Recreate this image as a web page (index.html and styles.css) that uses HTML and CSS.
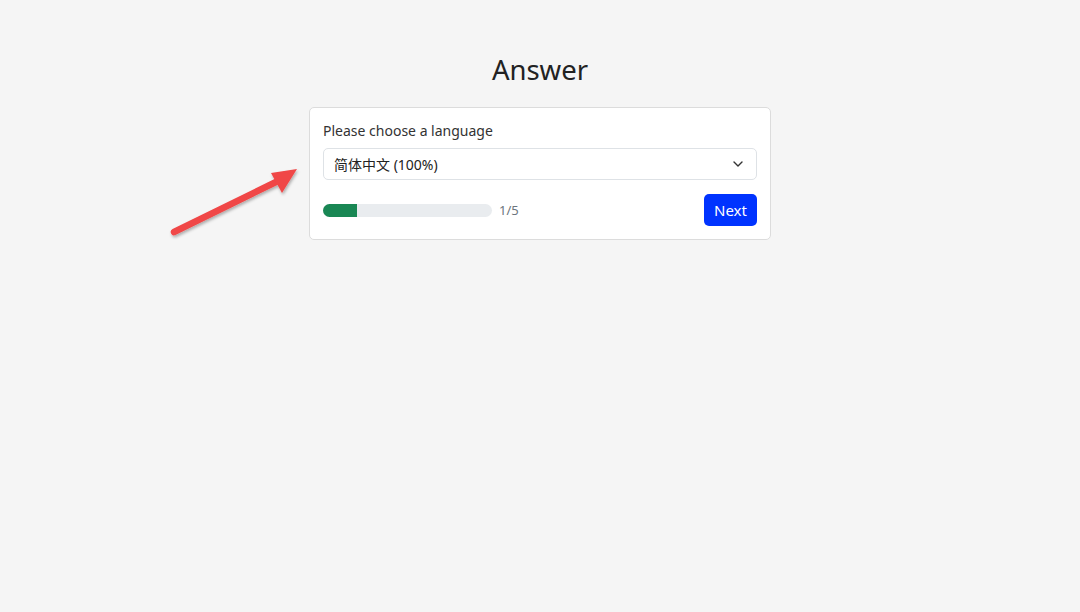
FILE: index.html
```html
<!DOCTYPE html>
<html>
<head>
<meta charset="utf-8">
<link rel="stylesheet" href="styles.css">
</head>
<body>
<main class="page">
  <h1 class="title">Answer</h1>
  <div class="card-wrap">
    <svg class="arrow" width="145" height="90" viewBox="0 0 145 90">
      <defs>
        <filter id="sh" x="-20%" y="-20%" width="140%" height="140%">
          <feDropShadow dx="1" dy="2" stdDeviation="1.5" flood-color="#000" flood-opacity="0.3"/>
        </filter>
      </defs>
      <g filter="url(#sh)">
        <line x1="12" y1="75" x2="116" y2="24" stroke="#f04646" stroke-width="6.5" stroke-linecap="round"/>
        <polygon points="135,12 109,16 120,36" fill="#f04646"/>
      </g>
    </svg>
    <section class="card">
      <label class="label">Please choose a language</label>
      <div class="select">
        <span>简体中文 (100%)</span>
        <svg class="chev" width="12" height="12" viewBox="0 0 12 12"><path d="M2 4l4 4 4-4" fill="none" stroke="#333" stroke-width="1.4" stroke-linecap="round" stroke-linejoin="round"/></svg>
      </div>
      <div class="footer">
        <div class="progress-group">
          <div class="progress"><div class="fill" style="width:20%"></div></div>
          <span class="count">1/5</span>
        </div>
        <button class="btn">Next</button>
      </div>
    </section>
  </div>
</main>
</body>
</html>
```
FILE: styles.css
```css
html, body {
  margin: 0;
  padding: 0;
  background: #f5f5f5;
  font-family: "Noto Sans", "Open Sans", "Noto Sans CJK SC", sans-serif;
  color: #212529;
}
.page {
  display: flex;
  flex-direction: column;
  align-items: center;
  padding-top: 50px;
}
.title {
  margin: 0 0 17px;
  font-size: 27.5px;
  font-weight: 400;
  line-height: 40px;
  color: #222;
}
.card-wrap {
  position: relative;
}
.arrow {
  position: absolute;
  left: -147px;
  top: 50px;
}
.card {
  width: 434px;
  background: #fff;
  border: 1px solid #dcdcdc;
  border-radius: 5px;
  padding: 13px;
  display: flex;
  flex-direction: column;
}
.label {
  font-size: 14px;
  line-height: 20px;
  color: #333;
  margin-bottom: 7px;
}
.select {
  height: 30px;
  border: 1px solid #dee2e6;
  border-radius: 5px;
  display: flex;
  align-items: center;
  justify-content: space-between;
  padding: 0 12px 0 10px;
  font-size: 14px;
  color: #222;
  font-family: "Noto Sans", "Noto Sans CJK SC", sans-serif;
}
.footer {
  margin-top: 14px;
  display: flex;
  align-items: center;
  justify-content: space-between;
}
.progress-group {
  display: flex;
  align-items: center;
  gap: 7px;
}
.progress {
  width: 169px;
  height: 13px;
  background: #e9ecef;
  border-radius: 7px;
  overflow: hidden;
}
.fill {
  height: 100%;
  background: #198754;
}
.count {
  font-size: 13px;
  color: #6c757d;
}
.btn {
  height: 32px;
  width: 53px;
  border: none;
  border-radius: 5px;
  background: #0033ff;
  color: #fff;
  font-family: inherit;
  font-size: 15px;
  padding: 0;
}
```
